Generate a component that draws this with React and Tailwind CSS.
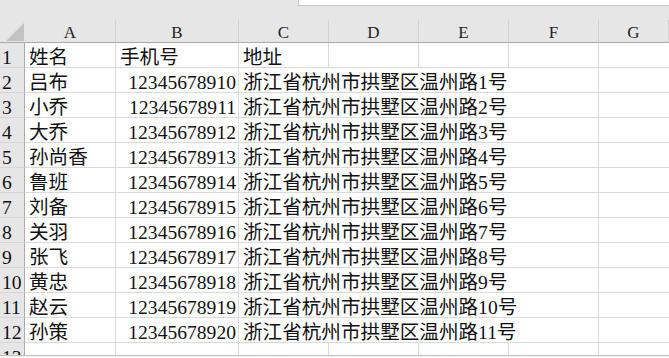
const NAMES = ["吕布", "小乔", "大乔", "孙尚香", "鲁班", "刘备", "关羽", "张飞", "黄忠", "赵云", "孙策"];

const ROWS = NAMES.map((name, i) => ({
  name,
  phone: String(12345678910 + i),
  addr: `浙江省杭州市拱墅区温州路${i + 1}号`,
}));

const COLS = [
  { key: "A", w: "w-[91px]" },
  { key: "B", w: "w-[123px]" },
  { key: "C", w: "w-[90px]" },
  { key: "D", w: "w-[90px]" },
  { key: "E", w: "w-[90px]" },
  { key: "F", w: "w-[90px]" },
  { key: "G", w: "w-[70px]" },
];

// one row number cell on the left edge
function RowHead({ n }) {
  return (
    <div className="w-[25px] h-[25px] shrink-0 bg-[#e6e6e6] border-r border-b border-r-[#ababab] border-b-[#d6d6d6] pl-[2px] pt-[4px] leading-[22px] whitespace-nowrap overflow-hidden">
      {n}
    </div>
  );
}

function Cell({ w, children, right, noBorderR }) {
  return (
    <div
      className={`${w} h-[25px] shrink-0 border-b border-[#dadada] pt-[4px] leading-[22px] whitespace-nowrap ${
        noBorderR ? "" : "border-r"
      } ${right ? "text-right pr-[2px]" : "pl-[4px]"}`}
    >
      {children}
    </div>
  );
}

export default function App() {
  return (
    <div className="w-[669px] h-[358px] overflow-hidden bg-white text-[19.6px] text-[#111] font-[family-name:'Liberation_Serif','Noto_Sans_CJK_SC',serif]">
      {/* formula bar strip */}
      <div className="h-5 bg-[#e6e6e6] flex">
        <div className="w-[298px] shrink-0" />
        <div className="flex-1 h-[6px] bg-white border-l border-b border-[#c6c6c6]" />
      </div>

      {/* column letters */}
      <div className="flex h-[23px] bg-[#e6e6e6] border-b border-[#a9a9a9]">
        <div className="w-[25px] shrink-0 flex items-end justify-end pr-[1px] pb-[1px]">
          <svg width="18" height="18" viewBox="0 0 18 18">
            <polygon points="18,0 18,18 0,18" fill="#c3c3c3" />
          </svg>
        </div>
        {COLS.map((c) => (
          <div
            key={c.key}
            className={`${c.w} shrink-0 border-r border-[#d2d2d2] text-center text-[17px] leading-[23px] pt-[1px] text-[#222]`}
          >
            {c.key}
          </div>
        ))}
      </div>

      <div className="h-[312px] overflow-hidden">
        {/* header row */}
        <div className="flex">
          <RowHead n={1} />
          <Cell w="w-[91px]">姓名</Cell>
          <Cell w="w-[123px]">手机号</Cell>
          <Cell w="w-[90px]">地址</Cell>
          <Cell w="w-[90px]" />
          <Cell w="w-[90px]" />
          <Cell w="w-[90px]" />
          <Cell w="w-[70px]" noBorderR />
        </div>

        {ROWS.map((r, i) => (
          <div key={r.phone} className="flex">
            <RowHead n={i + 2} />
            <Cell w="w-[91px]">{r.name}</Cell>
            <Cell w="w-[123px]" right>
              {r.phone}
            </Cell>
            <Cell w="w-[360px]">{r.addr}</Cell>
            <Cell w="w-[70px]" noBorderR />
          </div>
        ))}

        <div className="flex">
          <RowHead n={13} />
          {COLS.map((c) => (
            <Cell key={c.key} w={c.w} noBorderR={c.key === "G"} />
          ))}
        </div>
      </div>
      <div className="h-px bg-[#c4c4c4]" />
      <div className="h-px bg-[#efefef]" />
    </div>
  );
}
